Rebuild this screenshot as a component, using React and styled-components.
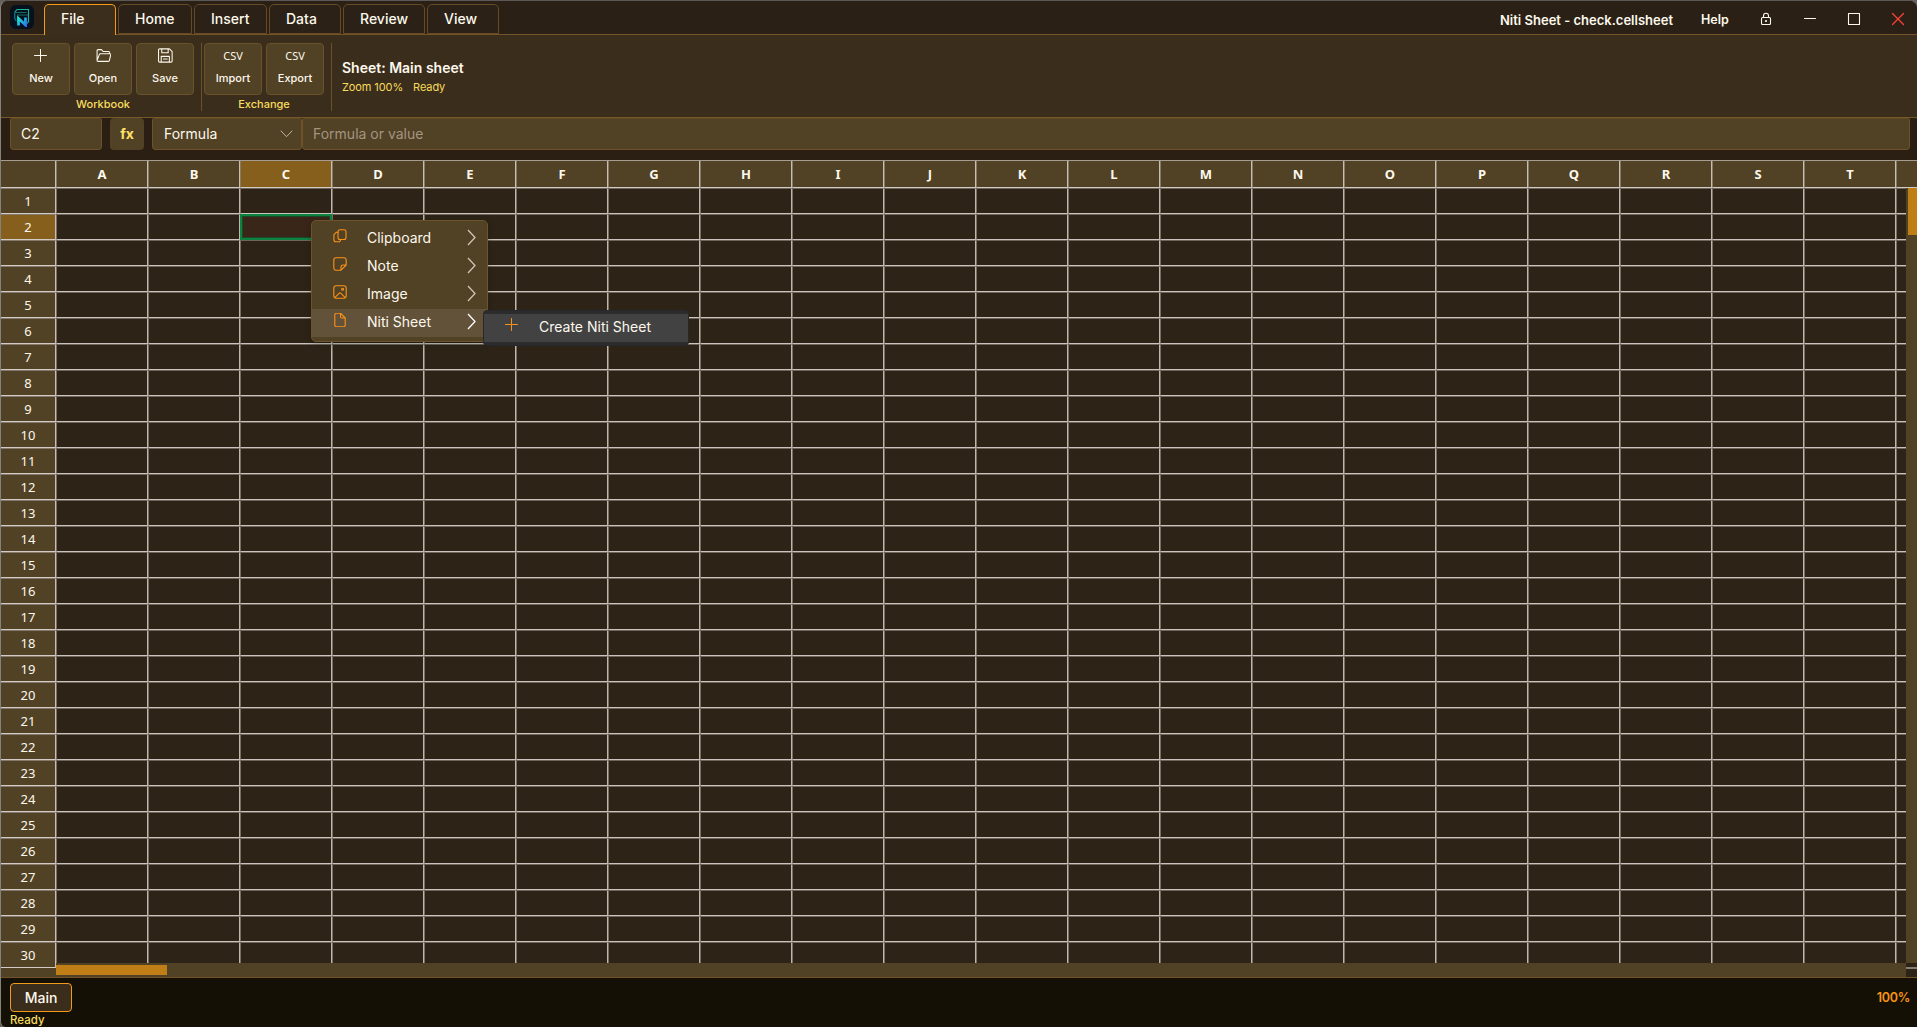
import React from "react";
import styled, { createGlobalStyle, css } from "styled-components";

const Global = createGlobalStyle`
  *, *::before, *::after { box-sizing: border-box; }
  html, body { margin: 0; background: #66625f; overflow: hidden; }
  body { font-family: Inter, "Liberation Sans", sans-serif; color: #fdf8ec; }
  svg { display: block; }
`;

const Window = styled.div`
  position: relative;
  width: 1917px;
  height: 1027px;
  display: flex;
  flex-direction: column;
  overflow: hidden;
  border-top: 1px solid #5c5856;
  border-left: 1px solid #85817c;
  border-radius: 8px 8px 0 6px;
  background: #2c2115;
`;

const TitleBar = styled.header`
  flex: none;
  height: 34px;
  display: flex;
  align-items: stretch;
  background: #2a2015;
  border-bottom: 1px solid #755429;
`;

const Logo = styled.div`
  width: 24px;
  height: 24px;
  margin: 4px 10px 0 9px;
  border-radius: 6px;
  background: #07101f;
  display: grid;
  place-items: center;
`;

const Tabs = styled.nav`
  display: flex;
  gap: 2px;
  padding-top: 3px;
`;

const Tab = styled.div`
  width: ${(p) => p.$w}px;
  height: 30px;
  padding: 0 0 1px 16px;
  display: flex;
  align-items: center;
  font-size: 14px;
  font-weight: 500;
  border: 1px solid ${(p) => (p.$active ? "#f59a1b" : "#664b25")};
  border-bottom: ${(p) => (p.$active ? "0" : "1px solid #664b25")};
  border-radius: 5px 5px 0 0;
  background: ${(p) => (p.$active ? "#3c2e1d" : "#2b2116")};
  ${(p) => p.$active && css`height: 31px; padding-bottom: 3px;`}
`;

const TitleRight = styled.div`
  margin-left: auto;
  display: flex;
  align-items: center;
  padding-right: 12px;
`;

const TitleText = styled.span`
  font-size: ${(p) => p.$size || 13}px;
  font-weight: 600;
  width: ${(p) => p.$w}px;
  margin-right: ${(p) => p.$gap}px;
  padding-top: 4px;
  white-space: nowrap;
`;

const WinIcon = styled.div`
  width: 14px;
  margin-left: ${(p) => p.$gap}px;
  padding-top: 3px;
`;

const Ribbon = styled.section`
  flex: none;
  height: 83px;
  display: flex;
  align-items: flex-start;
  padding: 8px 0 0 11px;
  background: #3b2d1c;
  border-bottom: 1px solid #755a29;
`;

const RibbonGroup = styled.div`
  height: 68px;
  padding-right: 7px;
  margin-right: ${(p) => p.$after}px;
  border-right: 1px solid #6b5129;
`;

const ButtonRow = styled.div`
  display: flex;
  gap: 4px;
`;

const RibbonButton = styled.div`
  width: 58px;
  height: 52px;
  border: 1px solid #6a522a;
  border-radius: 4px;
  background: #514125;
  display: flex;
  flex-direction: column;
  align-items: center;
`;

const Glyph = styled.div`
  height: 26px;
  padding-bottom: 3px;
  display: flex;
  align-items: center;
  font: 400 11px "Noto Sans", sans-serif;
`;

const ButtonLabel = styled.div`
  font-size: 11px;
  line-height: 17px;
  font-weight: 500;
`;

const GroupLabel = styled.div`
  text-align: center;
  font-size: 11px;
  line-height: 19px;
  font-weight: 450;
  color: #f7dc5c;
`;

const SheetInfo = styled.div`
  padding-top: 15px;
`;

const SheetName = styled.div`
  font-size: 14px;
  font-weight: 600;
  line-height: 20px;
`;

const SheetStatus = styled.div`
  display: flex;
  gap: 10px;
  font-size: 11px;
  line-height: 18px;
  font-weight: 400;
  letter-spacing: -0.1px;
  color: #f7dc5c;
`;

const FormulaBar = styled.section`
  flex: none;
  height: 42px;
  display: flex;
  align-items: flex-start;
  padding-left: 9px;
  background: #2b1f14;
`;

const Field = styled.div`
  width: ${(p) => p.$w}px;
  height: 32px;
  margin-right: ${(p) => p.$after || 0}px;
  padding: 0 8px 1px ${(p) => p.$pad || 10}px;
  display: flex;
  align-items: center;
  justify-content: space-between;
  border: 1px solid #6d5229;
  border-top-color: #604a26;
  border-radius: 2px 2px 4px 4px;
  background: #514125;
  font-size: 14px;
  color: ${(p) => (p.$muted ? "#a39580" : "#fdf8ec")};
`;

const Fx = styled.div`
  width: 34px;
  height: 32px;
  margin-right: 8px;
  display: grid;
  place-items: center;
  padding-bottom: 2px;
  border-radius: 4px;
  background: #514125;
  color: #fbe168;
  font-size: 14px;
  font-weight: 700;
`;

const GridArea = styled.main`
  flex: none;
  height: 817px;
  display: flex;
  flex-direction: column;
  overflow: hidden;
  border-top: 1px solid #a69d92;
  background: #2d2417;
  font-family: "Noto Sans", sans-serif;
`;

const HeaderRow = styled.div`
  flex: none;
  display: flex;
  height: 27px;
  overflow: hidden;
`;

const headerCell = css`
  flex: none;
  display: flex;
  align-items: center;
  justify-content: center;
  border-right: 1px solid #c6beb6;
  border-bottom: 1px solid #d3ccc6;
  background: ${(p) => (p.$active ? "#865f1c" : "#514125")};
`;

const Corner = styled.div`
  ${headerCell}
  width: 55px;
`;

const ColHeader = styled.div`
  ${headerCell}
  width: 92px;
  padding-bottom: 1px;
  border-left: 1px solid #85796a;
  font-size: 13px;
  font-weight: 700;
`;

const GridBody = styled.div`
  flex: 1;
  min-height: 0;
  display: flex;
`;

const RowHeaders = styled.div`
  flex: none;
  width: 55px;
  background: #514125;
`;

const RowHeader = styled.div`
  ${headerCell}
  height: 26px;
  border-top: 1px solid #85796a;
  font-size: 13px;
`;

const CellsColumn = styled.div`
  flex: none;
  width: 1850px;
  display: flex;
  flex-direction: column;
`;

const Cells = styled.div`
  height: 775px;
  display: grid;
  grid-template-columns: repeat(21, 92px);
  grid-auto-rows: 26px;
  overflow: hidden;
`;

const Cell = styled.div`
  border-right: 1px solid #beb6b0;
  border-left: 1px solid #786e63;
  border-bottom: 1px solid #cbc4be;
  border-top: 1px solid #6e6459;
  ${(p) =>
    p.$selected &&
    css`
      border: 2px solid #0c823f;
      box-shadow: inset 0 0 0 1px #1b4a2a;
      background: #3a2618;
    `}
`;

const HScroll = styled.div`
  height: 14px;
  padding-top: 2px;
  background: #514125;
`;

const HThumb = styled.div`
  width: 111px;
  height: 10px;
  background: #c07f16;
`;

const VColumn = styled.div`
  flex: 1;
  display: flex;
  flex-direction: column;
`;

const VScroll = styled.div`
  height: 775px;
  padding-left: 2px;
  background: #514125;
`;

const VThumb = styled.div`
  height: 47px;
  background: #c07f16;
`;

const ScrollCorner = styled.div`
  height: 6px;
  border-bottom: 2px solid #887e73;
`;

const Footer = styled.footer`
  flex: 1;
  display: flex;
  justify-content: space-between;
  padding: 5px 7px 0 9px;
  border-top: 1px solid #70532a;
  background: #141006;
`;

const SheetTab = styled.div`
  width: 62px;
  height: 29px;
  display: grid;
  place-items: center;
  border: 1px solid #f39a1d;
  border-radius: 4px;
  background: #3b2d1c;
  font-size: 14px;
  font-weight: 500;
`;

const StatusText = styled.div`
  font-size: 11.5px;
  line-height: 14px;
  padding-top: 1px;
  font-weight: 500;
  color: #f7dc5c;
`;

const ZoomLevel = styled.div`
  padding-top: 7px;
  font-size: 12.5px;
  font-weight: 600;
  letter-spacing: -0.3px;
  color: #f99412;
`;

const Menu = styled.div`
  position: absolute;
  left: 310px;
  top: 219px;
  width: 177px;
  height: 122px;
  padding: 4px 0;
  border: 1px solid #6d5329;
  border-radius: 5px;
  background: #514125;
  box-shadow: 0 2px 6px rgba(0, 0, 0, 0.25);
`;

const MenuItem = styled.div`
  height: 28px;
  display: flex;
  align-items: center;
  padding: 0 11px 3px 21px;
  font-size: 14px;
  background: ${(p) => (p.$active ? "#62523a" : "transparent")};
`;

const MenuIcon = styled.div`
  width: 34px;
  padding-bottom: 3px;
  color: #fb9318;
`;

const MenuArrow = styled.div`
  margin-left: auto;
  padding-bottom: 1px;
  color: ${(p) => (p.$active ? "#ffffff" : "#cfc6b6")};
`;

const SubMenu = styled.div`
  position: absolute;
  left: 482px;
  top: 309px;
  width: 206px;
  height: 36px;
  padding: 3px 0 0;
  border: 1px solid #28282a;
  border-radius: 4px;
  background: #2c2c2e;
`;

const SubMenuItem = styled.div`
  height: 28px;
  display: flex;
  align-items: center;
  padding: 0 0 3px 21px;
  background: #424243;
  font-size: 14px;
`;

function Icon({ size = 14, stroke = "currentColor", sw = 1, children }) {
  return (
    <svg width={size} height={size} viewBox="0 0 14 14" fill="none" stroke={stroke} strokeWidth={sw} strokeLinejoin="round" strokeLinecap="round">
      {children}
    </svg>
  );
}

const icons = {
  plus: <path d="M6.5 .5v12M.5 6.5h12" />,
  open: <path d="M1 11V2.5a1 1 0 0 1 1-1h3l1.6 1.7h4.9a1 1 0 0 1 1 1v1M1 11.5 3.2 5.9a1 1 0 0 1 .9-.6h9a.8.8 0 0 1 .7 1l-1.3 5.3a1 1 0 0 1-1 .9H1.9a.9.9 0 0 1-.9-1z" />,
  save: <path d="M1.5.8h9.2l2.5 2.5v8.9a1 1 0 0 1-1 1H1.5a1 1 0 0 1-1-1V1.8a1 1 0 0 1 1-1zM3.5 1v3.5h6V1M3 13V7.8h7.6V13M5 10.3h3.6" />,
  copy: (
    <>
      <rect x="5" y=".8" width="8" height="9.7" rx="2" />
      <path d="M5 3.3H3.2L.9 5.6v5.2a2 2 0 0 0 2 2h2.7a2 2 0 0 0 2-2.2" />
    </>
  ),
  note: <path d="M3 .8h8a2.2 2.2 0 0 1 2.2 2.2v5L8 13.2H3A2.2 2.2 0 0 1 .8 11V3A2.2 2.2 0 0 1 3 .8zM13 8h-3a2 2 0 0 0-2 2v3" />,
  image: (
    <>
      <rect x=".8" y=".8" width="12.4" height="12.4" rx="2.4" />
      <circle cx="9.6" cy="4.3" r="1" />
      <path d="m2 12.3 4-4a1.4 1.4 0 0 1 2 0l4 4" />
    </>
  ),
  file: <path d="M3.3.3h4.4L12.2 5v7.2a1.5 1.5 0 0 1-1.5 1.5H3.3a1.5 1.5 0 0 1-1.5-1.5V1.8A1.5 1.5 0 0 1 3.3.3zM7.5.5v3.3A1.3 1.3 0 0 0 8.8 5h3.3" />,
};

const Chevron = () => (
  <svg width="9" height="17" viewBox="0 0 9 17" fill="none" stroke="currentColor" strokeWidth="1.3">
    <path d="m1 1 7 7.5-7 7.5" />
  </svg>
);

const tabs = [
  ["File", 72],
  ["Home", 74],
  ["Insert", 73],
  ["Data", 72],
  ["Review", 82],
  ["View", 72],
];
const columns = "ABCDEFGHIJKLMNOPQRST".split("");
const rows = Array.from({ length: 30 }, (_, i) => i + 1);
const menuItems = [
  ["Clipboard", "copy"],
  ["Note", "note"],
  ["Image", "image"],
  ["Niti Sheet", "file"],
];

function Command({ icon, text, label }) {
  return (
    <RibbonButton>
      <Glyph>{icon ? <Icon size={icon === "plus" ? 14 : 15}>{icons[icon]}</Icon> : text}</Glyph>
      <ButtonLabel>{label}</ButtonLabel>
    </RibbonButton>
  );
}

export default function App() {
  return (
    <>
      <Global />
      <Window>
        <TitleBar>
          <Logo>
            <svg width="18" height="19" viewBox="0 0 18 19" fill="none">
              <defs>
                <linearGradient id="mark" x1="0" y1="0" x2="1" y2="1">
                  <stop offset="0" stopColor="#18e6c8" />
                  <stop offset="1" stopColor="#2a7cf5" />
                </linearGradient>
              </defs>
              <path d="M1.5 4.5 4 1.5h11.5v12l-1.5 2" stroke="#19b894" strokeWidth="1.1" />
              <path d="M2 4.5h11.5M4 7h11" stroke="#167c6c" strokeWidth=".9" />
              <path d="M5.5 17.5v-7l7 6.5V9.5" stroke="url(#mark)" strokeWidth="2.8" />
              <path d="M1.8 5v6l1.5 2" stroke="#1693a8" />
            </svg>
          </Logo>
          <Tabs>
            {tabs.map(([name, w], i) => (
              <Tab key={name} $w={w} $active={i === 0}>{name}</Tab>
            ))}
          </Tabs>
          <TitleRight>
            <TitleText $w={172} $gap={29}>Niti Sheet - check.cellsheet</TitleText>
            <TitleText $w={28} $gap={30} $size={12.5}>Help</TitleText>
            <WinIcon $gap={0}>
              <Icon sw={1.1}>
                <rect x="2.5" y="5.5" width="9" height="7" rx="1" />
                <path d="M4.5 5.5V3.8a2.5 2.5 0 0 1 5 0v1.7" />
                <circle cx="7" cy="9" r=".5" fill="currentColor" />
              </Icon>
            </WinIcon>
            <WinIcon $gap={30}>
              <Icon><path d="M1.5 6.5h11" /></Icon>
            </WinIcon>
            <WinIcon $gap={30}>
              <Icon sw={1.1}><path d="M1.5 1.5h11v11h-11z" /></Icon>
            </WinIcon>
            <WinIcon $gap={30}>
              <Icon stroke="#ff4038" sw={1.3}><path d="m1.5 1.5 11 11m0-11-11 11" /></Icon>
            </WinIcon>
          </TitleRight>
        </TitleBar>

        <Ribbon>
          <RibbonGroup $after={2}>
            <ButtonRow>
              <Command icon="plus" label="New" />
              <Command icon="open" label="Open" />
              <Command icon="save" label="Save" />
            </ButtonRow>
            <GroupLabel>Workbook</GroupLabel>
          </RibbonGroup>
          <RibbonGroup $after={10}>
            <ButtonRow>
              <Command text="CSV" label="Import" />
              <Command text="CSV" label="Export" />
            </ButtonRow>
            <GroupLabel>Exchange</GroupLabel>
          </RibbonGroup>
          <SheetInfo>
            <SheetName>Sheet: Main sheet</SheetName>
            <SheetStatus>
              <span>Zoom 100%</span>
              <span>Ready</span>
            </SheetStatus>
          </SheetInfo>
        </Ribbon>

        <FormulaBar>
          <Field $w={92} $after={8}>C2</Field>
          <Fx>fx</Fx>
          <Field $w={150} $pad={11}>
            Formula
            <svg width="13" height="8" viewBox="0 0 13 8" fill="none" stroke="#c0b49f"><path d="m.7.7 5.8 6 5.8-6" /></svg>
          </Field>
          <Field $w={1608} $muted>Formula or value</Field>
        </FormulaBar>

        <GridArea>
          <HeaderRow>
            <Corner />
            {columns.map((c) => (
              <ColHeader key={c} $active={c === "C"}>{c}</ColHeader>
            ))}
            <ColHeader />
          </HeaderRow>
          <GridBody>
            <RowHeaders>
              {rows.map((r) => (
                <RowHeader key={r} $active={r === 2}>{r}</RowHeader>
              ))}
            </RowHeaders>
            <CellsColumn>
              <Cells>
                {rows.map((r) =>
                  [...columns, "U"].map((c) => <Cell key={c + r} $selected={c === "C" && r === 2} />)
                )}
              </Cells>
              <HScroll><HThumb /></HScroll>
            </CellsColumn>
            <VColumn>
              <VScroll><VThumb /></VScroll>
              <ScrollCorner />
            </VColumn>
          </GridBody>
        </GridArea>

        <Footer>
          <div>
            <SheetTab>Main</SheetTab>
            <StatusText>Ready</StatusText>
          </div>
          <ZoomLevel>100%</ZoomLevel>
        </Footer>

        <Menu>
          {menuItems.map(([name, icon]) => {
            const active = name === "Niti Sheet";
            return (
              <MenuItem key={name} $active={active}>
                <MenuIcon>
                  <Icon sw={1.1}>{icons[icon]}</Icon>
                </MenuIcon>
                {name}
                <MenuArrow $active={active}><Chevron /></MenuArrow>
              </MenuItem>
            );
          })}
        </Menu>
        <SubMenu>
          <SubMenuItem>
            <MenuIcon><Icon>{icons.plus}</Icon></MenuIcon>
            Create Niti Sheet
          </SubMenuItem>
        </SubMenu>
      </Window>
    </>
  );
}
